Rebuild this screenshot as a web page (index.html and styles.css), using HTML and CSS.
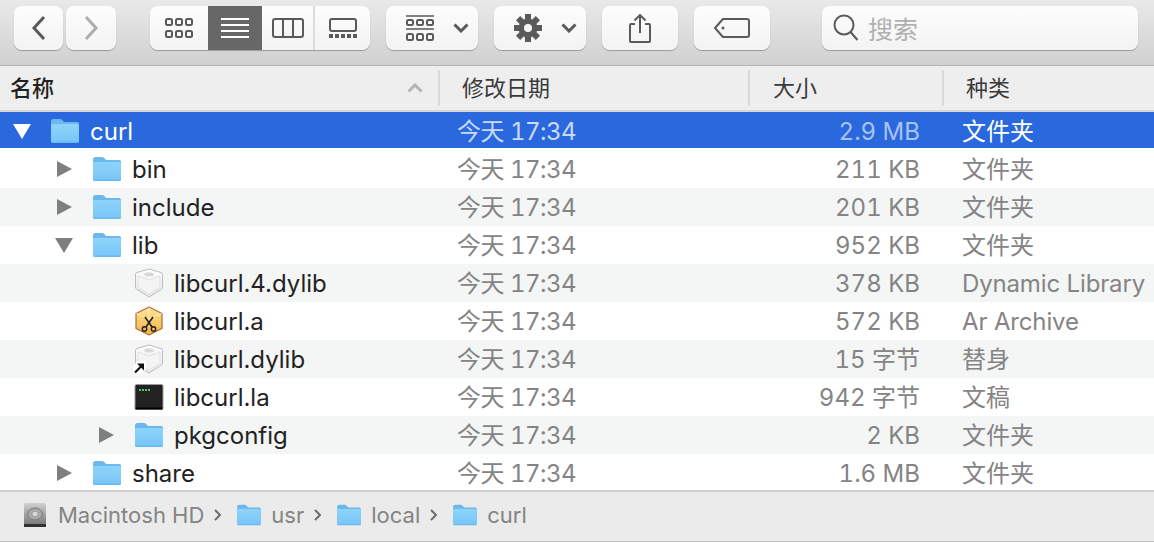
FILE: index.html
```html
<!DOCTYPE html>
<html lang="en">
<head>
    <meta charset="UTF-8">
    <title>curl</title>
    <link rel="stylesheet" href="styles.css">
</head>
<body>
    <!-- Shared icons -->
    <svg class="defs" width="0" height="0">
        <defs>
            <linearGradient id="folder-fill" x1="0" y1="0" x2="0" y2="1">
                <stop offset="0" stop-color="#8ed4fb"/>
                <stop offset="1" stop-color="#78c6f8"/>
            </linearGradient>
            <linearGradient id="dylib-fill" x1="0" y1="0" x2="0" y2="1">
                <stop offset="0" stop-color="#fdfdfd"/>
                <stop offset="1" stop-color="#e6e6e6"/>
            </linearGradient>
            <linearGradient id="archive-fill" x1="0" y1="0" x2="0" y2="1">
                <stop offset="0" stop-color="#fde39a"/>
                <stop offset="1" stop-color="#f2b443"/>
            </linearGradient>
            <linearGradient id="disk-fill" x1="0" y1="0" x2="0" y2="1">
                <stop offset="0" stop-color="#d0d0d0"/>
                <stop offset="1" stop-color="#707070"/>
            </linearGradient>
            <symbol id="folder" viewBox="0 0 30 26">
                <path d="M1 3.500C1 2 2 1 3.500 1H10c1 0 1.600.4 2.200 1L14 4h13c1.200 0 2 .8 2 2v17.500c0 1-.7 1.500-1.500 1.500h-25C1.600 25 1 24.400 1 23.500z" fill="#6ab8ee"/>
                <path d="M1 7.500C1 6.500 1.700 6 2.500 6h25c.8 0 1.500.5 1.500 1.500V22.500c0 .6-.4 1-1 1H2c-.6 0-1-.4-1-1z" fill="url(#folder-fill)"/>
            </symbol>
            <symbol id="dylib" viewBox="0 0 30 30">
                <path d="M15 1l12 3.500q1.500.5 1.500 2V19q0 1.500-1.200 2.300L15 29 2.700 21.300Q1.500 20.500 1.500 19V6.500q0-1.500 1.500-2z" fill="url(#dylib-fill)" stroke="#bdbdbd"/>
                <path d="M4 8l11 4 11-4v10.500q0 1-1 1.600L15 26 5 20.100q-1-.6-1-1.600z" fill="#f4f4f4" stroke="#e2e2e2"/>
                <path d="M10.500 5.500c0-1.200 9-1.200 9 0v2c0 1.200-9 1.200-9 0z" fill="#d8d8d8"/>
            </symbol>
        </defs>
    </svg>

    <header class="toolbar">
        <div class="nav-pair">
            <button class="btn back" type="button">
                <svg width="16" height="26" viewBox="0 0 16 26"><path d="M13 2L3 13l10 11" class="line thick"/></svg>
            </button>
            <button class="btn forward" type="button">
                <svg width="16" height="26" viewBox="0 0 16 26"><path d="M3 2l10 11L3 24" class="line thick muted"/></svg>
            </button>
        </div>

        <div class="btn view-group">
            <span class="view-cell cell-icons">
                <svg width="28" height="20" viewBox="0 0 28 20">
                    <g class="line thin">
                        <rect x="1" y="1" width="6" height="6" rx="1.500"/><rect x="11" y="1" width="6" height="6" rx="1.500"/><rect x="21" y="1" width="6" height="6" rx="1.500"/>
                        <rect x="1" y="13" width="6" height="6" rx="1.500"/><rect x="11" y="13" width="6" height="6" rx="1.500"/><rect x="21" y="13" width="6" height="6" rx="1.500"/>
                    </g>
                </svg>
            </span>
            <span class="view-cell cell-list active">
                <svg width="28" height="20" viewBox="0 0 28 20"><path d="M0 1h28M0 7h28M0 13h28M0 19h28" stroke="#fff" stroke-width="2"/></svg>
            </span>
            <span class="view-cell cell-columns">
                <svg width="32" height="20" viewBox="0 0 32 20"><g class="line thin"><rect x="1" y="1" width="30" height="18" rx="2"/><path d="M11 1v18M21 1v18"/></g></svg>
            </span>
            <span class="view-cell cell-gallery">
                <svg width="28" height="20" viewBox="0 0 28 20">
                    <rect x="1" y="1" width="26" height="12" rx="2" class="line thin"/>
                    <path d="M0 16h4v4H0zM6 16h4v4H6zM12 16h4v4h-4zM18 16h4v4h-4zM24 16h4v4h-4z" fill="#5a5a5a"/>
                </svg>
            </span>
        </div>

        <button class="btn menu-btn" type="button">
            <svg width="28" height="26" viewBox="0 0 28 26">
                <path d="M0 1h28M0 14h28" stroke="#5a5a5a" stroke-width="1.500"/>
                <g class="line thin">
                    <rect x="1" y="5" width="6" height="5" rx="1.500"/><rect x="11" y="5" width="6" height="5" rx="1.500"/><rect x="21" y="5" width="6" height="5" rx="1.500"/>
                    <rect x="1" y="19" width="6" height="6" rx="1.500"/><rect x="11" y="19" width="6" height="6" rx="1.500"/><rect x="21" y="19" width="6" height="6" rx="1.500"/>
                </g>
            </svg>
            <svg class="chevron" width="16" height="10" viewBox="0 0 16 10"><path d="M1.500 1.500L8 8l6.500-6.500" class="line thick"/></svg>
        </button>

        <button class="btn menu-btn" type="button">
            <svg width="28" height="28" viewBox="0 0 28 28">
                <g fill="#5a5a5a">
                    <circle cx="14" cy="14" r="9.500"/>
                    <path d="M11 0h6v6h-6zM11 22h6v6h-6zM0 11h6v6H0zM22 11h6v6h-6z"/>
                    <path d="M11 0h6v6h-6zM11 22h6v6h-6zM0 11h6v6H0zM22 11h6v6h-6z" transform="rotate(45 14 14)"/>
                </g>
                <circle cx="14" cy="14" r="4" fill="#f6f6f6"/>
            </svg>
            <svg class="chevron" width="16" height="10" viewBox="0 0 16 10"><path d="M1.500 1.500L8 8l6.500-6.500" class="line thick"/></svg>
        </button>

        <button class="btn share-btn" type="button">
            <svg width="22" height="29" viewBox="0 0 22 29">
                <path d="M6 10H2a1 1 0 0 0-1 1v16a1 1 0 0 0 1 1h18a1 1 0 0 0 1-1V11a1 1 0 0 0-1-1h-4M11 19V1M5.500 6.500L11 1l5.500 5.500" class="line thin"/>
            </svg>
        </button>

        <button class="btn tag-btn" type="button">
            <svg width="36" height="20" viewBox="0 0 36 20">
                <path d="M9 1h24a2 2 0 0 1 2 2v14a2 2 0 0 1-2 2H9L1 10z" class="line thin" stroke-linejoin="round"/>
                <circle cx="9" cy="10" r="1.500" fill="#5a5a5a"/>
            </svg>
        </button>

        <div class="btn search">
            <svg width="26" height="28" viewBox="0 0 26 28"><circle cx="11" cy="11" r="9.500" class="line thin"/><path d="M17.500 18l7 8" class="line thin"/></svg>
            <span class="search-text">搜索</span>
        </div>
    </header>

    <div class="col-header">
        <div class="col col-name"><span class="col-label">名称</span>
            <svg class="sort-arrow" width="16" height="10" viewBox="0 0 16 10"><path d="M1.500 8.500L8 2l6.500 6.500" class="line thick sort"/></svg>
        </div>
        <div class="col col-date"><span class="col-label">修改日期</span></div>
        <div class="col col-size"><span class="col-label">大小</span></div>
        <div class="col col-kind"><span class="col-label">种类</span></div>
    </div>

    <main class="list">
        <div class="row selected">
            <div class="cell-name depth-0">
                <svg class="tri" width="20" height="20" viewBox="0 0 20 20"><path d="M1 3h18L10 18z" fill="#fff"/></svg>
                <svg class="ficon" width="30" height="26"><use href="#folder"/></svg>
                <span class="label">curl</span>
            </div>
            <div class="cell-date">今天 17:34</div><div class="cell-size">2.9 MB</div><div class="cell-kind">文件夹</div>
        </div>
        <div class="row">
            <div class="cell-name depth-1">
                <svg class="tri" width="20" height="20" viewBox="0 0 20 20"><path d="M3 2l15 8-15 8z" fill="#7f7f7f"/></svg>
                <svg class="ficon" width="30" height="26"><use href="#folder"/></svg>
                <span class="label">bin</span>
            </div>
            <div class="cell-date">今天 17:34</div><div class="cell-size">211 KB</div><div class="cell-kind">文件夹</div>
        </div>
        <div class="row">
            <div class="cell-name depth-1">
                <svg class="tri" width="20" height="20" viewBox="0 0 20 20"><path d="M3 2l15 8-15 8z" fill="#7f7f7f"/></svg>
                <svg class="ficon" width="30" height="26"><use href="#folder"/></svg>
                <span class="label">include</span>
            </div>
            <div class="cell-date">今天 17:34</div><div class="cell-size">201 KB</div><div class="cell-kind">文件夹</div>
        </div>
        <div class="row">
            <div class="cell-name depth-1">
                <svg class="tri" width="20" height="20" viewBox="0 0 20 20"><path d="M1 3h18L10 18z" fill="#7f7f7f"/></svg>
                <svg class="ficon" width="30" height="26"><use href="#folder"/></svg>
                <span class="label">lib</span>
            </div>
            <div class="cell-date">今天 17:34</div><div class="cell-size">952 KB</div><div class="cell-kind">文件夹</div>
        </div>
        <div class="row">
            <div class="cell-name depth-2">
                <span class="tri-gap"></span>
                <svg class="ficon" width="30" height="30"><use href="#dylib"/></svg>
                <span class="label">libcurl.4.dylib</span>
            </div>
            <div class="cell-date">今天 17:34</div><div class="cell-size">378 KB</div><div class="cell-kind latin">Dynamic Library</div>
        </div>
        <div class="row">
            <div class="cell-name depth-2">
                <span class="tri-gap"></span>
                <svg class="ficon" width="30" height="30" viewBox="0 0 30 30">
                    <path d="M15 1l13 6.500v15L15 29 2 22.500v-15z" fill="url(#archive-fill)" stroke="#a9703a" stroke-width="1.200" stroke-linejoin="round"/>
                    <path d="M2.500 7.500L15 13l12.500-5.500M15 1.500V13" fill="none" stroke="#ffedb8"/>
                    <path d="M11 11l7 10M19 11l-7 10" stroke="#222" stroke-width="1.600"/>
                    <circle cx="10.500" cy="23" r="2.200" fill="none" stroke="#222" stroke-width="1.400"/>
                    <circle cx="19.500" cy="23" r="2.200" fill="none" stroke="#222" stroke-width="1.400"/>
                </svg>
                <span class="label">libcurl.a</span>
            </div>
            <div class="cell-date">今天 17:34</div><div class="cell-size">572 KB</div><div class="cell-kind latin">Ar Archive</div>
        </div>
        <div class="row">
            <div class="cell-name depth-2">
                <span class="tri-gap"></span>
                <span class="alias-icon">
                    <svg class="ficon" width="30" height="30"><use href="#dylib"/></svg>
                    <svg class="alias-arrow" width="13" height="13" viewBox="0 0 13 13">
                        <path d="M0 5l5-5h8v8l-5 5H0z" fill="#fff"/>
                        <path d="M2 11.500l6-6" stroke="#111" stroke-width="2.200"/>
                        <path d="M4 2.500h7v7z" fill="#111"/>
                    </svg>
                </span>
                <span class="label">libcurl.dylib</span>
            </div>
            <div class="cell-date">今天 17:34</div><div class="cell-size">15 字节</div><div class="cell-kind">替身</div>
        </div>
        <div class="row">
            <div class="cell-name depth-2">
                <span class="tri-gap"></span>
                <svg class="ficon" width="30" height="26" viewBox="0 0 30 26">
                    <rect x="1" y="0.500" width="28" height="25" rx="1.500" fill="#222" stroke="#9a9a9a"/>
                    <rect x="1.500" y="23.500" width="27" height="2" fill="#000"/>
                    <path d="M5 5h2v2H5zM8 5h2v2H8zM11 5h2v2h-2zM14 5h2v2h-2z" fill="#5fbd62"/>
                </svg>
                <span class="label">libcurl.la</span>
            </div>
            <div class="cell-date">今天 17:34</div><div class="cell-size">942 字节</div><div class="cell-kind">文稿</div>
        </div>
        <div class="row">
            <div class="cell-name depth-2">
                <svg class="tri" width="20" height="20" viewBox="0 0 20 20"><path d="M3 2l15 8-15 8z" fill="#7f7f7f"/></svg>
                <svg class="ficon" width="30" height="26"><use href="#folder"/></svg>
                <span class="label">pkgconfig</span>
            </div>
            <div class="cell-date">今天 17:34</div><div class="cell-size">2 KB</div><div class="cell-kind">文件夹</div>
        </div>
        <div class="row">
            <div class="cell-name depth-1">
                <svg class="tri" width="20" height="20" viewBox="0 0 20 20"><path d="M3 2l15 8-15 8z" fill="#7f7f7f"/></svg>
                <svg class="ficon" width="30" height="26"><use href="#folder"/></svg>
                <span class="label">share</span>
            </div>
            <div class="cell-date">今天 17:34</div><div class="cell-size">1.6 MB</div><div class="cell-kind">文件夹</div>
        </div>
    </main>

    <footer class="path-bar">
        <svg class="disk" width="24" height="26" viewBox="0 0 24 26">
            <rect x="1" y="1" width="22" height="24" rx="2" fill="url(#disk-fill)"/>
            <ellipse cx="12" cy="12" rx="7.500" ry="6" fill="#a8a8a8" stroke="#777"/>
            <ellipse cx="12" cy="12" rx="2.500" ry="2" fill="#e0e0e0"/>
            <rect x="1" y="22" width="22" height="3" fill="#333"/>
        </svg>
        <span class="crumb">Macintosh HD</span>
        <svg class="sep" width="7" height="12" viewBox="0 0 7 12"><path d="M1 1l5 5-5 5" fill="none" stroke="#6e6e6e" stroke-width="2"/></svg>
        <svg class="crumb-folder" width="26" height="22" viewBox="0 0 30 26"><use href="#folder"/></svg>
        <span class="crumb">usr</span>
        <svg class="sep" width="7" height="12" viewBox="0 0 7 12"><path d="M1 1l5 5-5 5" fill="none" stroke="#6e6e6e" stroke-width="2"/></svg>
        <svg class="crumb-folder" width="26" height="22" viewBox="0 0 30 26"><use href="#folder"/></svg>
        <span class="crumb">local</span>
        <svg class="sep" width="7" height="12" viewBox="0 0 7 12"><path d="M1 1l5 5-5 5" fill="none" stroke="#6e6e6e" stroke-width="2"/></svg>
        <svg class="crumb-folder" width="26" height="22" viewBox="0 0 30 26"><use href="#folder"/></svg>
        <span class="crumb">curl</span>
    </footer>
</body>
</html>
```

FILE: styles.css
```css
/* Basic reset */
* {
    box-sizing: border-box;
}

body {
    margin: 0;
    width: 1154px;
    height: 542px;
    overflow: hidden;
    background-color: #fff;
    font-family: "Inter", "Noto Sans CJK SC", sans-serif;
    font-size: 24px;
    color: #222;
}

.defs {
    position: absolute;
}

/* Icon strokes */
.line {
    fill: none;
    stroke: #5a5a5a;
}

.thin {
    stroke-width: 2;
}

.thick {
    stroke-width: 3;
}

.muted {
    stroke: #adadad;
}

.sort {
    stroke: #b4b4b4;
}

/* Toolbar */
.toolbar {
    display: flex;
    align-items: flex-start;
    height: 66px;
    padding: 6px 0 0 14px;
    background: linear-gradient(#e9e9e9, #d0d0d0);
    border-bottom: 1px solid #b4b4b4;
}

.btn {
    display: flex;
    align-items: center;
    justify-content: center;
    height: 44px;
    padding: 0;
    border: none;
    border-radius: 8px;
    background: linear-gradient(#fdfdfd, #f3f3f3);
    box-shadow: 0 1px 1px rgba(0, 0, 0, 0.28);
}

.nav-pair {
    display: flex;
    gap: 3px;
    margin-right: 34px;
}

.back {
    width: 49px;
}

.forward {
    width: 50px;
}

.view-group {
    width: 220px;
    overflow: hidden;
    margin-right: 16px;
    justify-content: flex-start;
}

.view-cell {
    display: flex;
    align-items: center;
    justify-content: center;
    height: 44px;
}

.cell-icons {
    width: 58px;
}

.cell-list {
    width: 54px;
}

.cell-columns {
    width: 53px;
    border-right: 2px solid #dcdcdc;
}

.cell-gallery {
    width: 55px;
}

.active {
    height: 46px;
    margin-top: -1px;
    background-color: #676767;
}

.menu-btn {
    width: 92px;
    gap: 19px;
    margin-right: 16px;
    padding-left: 20px;
    justify-content: flex-start;
}

.share-btn,
.tag-btn {
    width: 76px;
    margin-right: 16px;
}

.tag-btn {
    margin-right: 52px;
}

.search {
    width: 316px;
    justify-content: flex-start;
    padding-left: 11px;
    gap: 9px;
}

.search-text {
    font-size: 25px;
    color: #b0b0b0;
}

/* Column header */
.col-header {
    display: grid;
    grid-template-columns: 438px 310px 194px 1fr;
    align-items: center;
    height: 46px;
    padding-bottom: 1px;
    background-color: #eeeeee;
    border-bottom: 2px solid #d6d6d6;
    font-size: 22px;
    color: #3a3a3a;
}

.col {
    display: flex;
    align-items: center;
    justify-content: space-between;
    height: 36px;
    border-left: 2px solid #d8d8d8;
}

.col-label {
    margin-top: -4px;
}

.col-name {
    border-left: none;
    padding: 0 15px 0 10px;
    color: #222;
    font-weight: 500;
}

.col-date {
    padding-left: 22px;
}

.col-size {
    padding-left: 23px;
}

.col-kind {
    padding-left: 22px;
}

/* File rows */
.list {
    height: 378px;
    overflow: hidden;
}

.row {
    display: grid;
    grid-template-columns: 438px 312px 170px 1fr;
    align-items: center;
    height: 38px;
    line-height: 30px;
    color: #848484;
    background-color: #fff;
}

.row:nth-child(odd) {
    background-color: #f4f5f5;
}

.row.selected {
    background: linear-gradient(#2a68dd 36px, #fff 36px);
    color: #a9c2f3;
}

.row:last-child {
    background-color: #fff;
}

.cell-name {
    display: flex;
    align-items: center;
    color: #222;
}

.label {
    padding-top: 2px;
}

.selected .cell-name,
.selected .cell-kind {
    color: #fff;
}

.selected .cell-date {
    color: #c9d9f7;
}

.depth-0 {
    padding-left: 12px;
}

.depth-1 {
    padding-left: 54px;
}

.depth-2 {
    padding-left: 96px;
}

.tri,
.tri-gap {
    flex: none;
    width: 20px;
    height: 20px;
    margin-right: 18px;
}

.ficon {
    flex: none;
    margin-right: 10px;
}

.alias-icon {
    position: relative;
    display: flex;
    flex: none;
}

.alias-arrow {
    position: absolute;
    left: -1px;
    bottom: 0;
}

.cell-date {
    padding: 2px 0 0 21px;
    margin-left: -2px;
    font-variant-numeric: tabular-nums;
    letter-spacing: -0.5px;
}

.cell-size {
    padding-top: 2px;
    text-align: right;
    font-variant-numeric: tabular-nums;
}

.cell-kind {
    padding: 2px 0 0 42px;
    white-space: nowrap;
}

.latin {
    letter-spacing: -0.15px;
}

/* Path bar */
.path-bar {
    display: flex;
    align-items: center;
    height: 52px;
    padding: 0 0 3px 23px;
    background-color: #ebebeb;
    border-top: 2px solid #d0d0d0;
    border-bottom: 1px solid #c0c0c0;
    font-size: 22px;
    color: #848484;
}

.disk {
    margin-right: 11px;
}

.crumb-folder {
    margin-right: 9px;
}

.sep {
    margin: 0 15px 0 10px;
}
```
